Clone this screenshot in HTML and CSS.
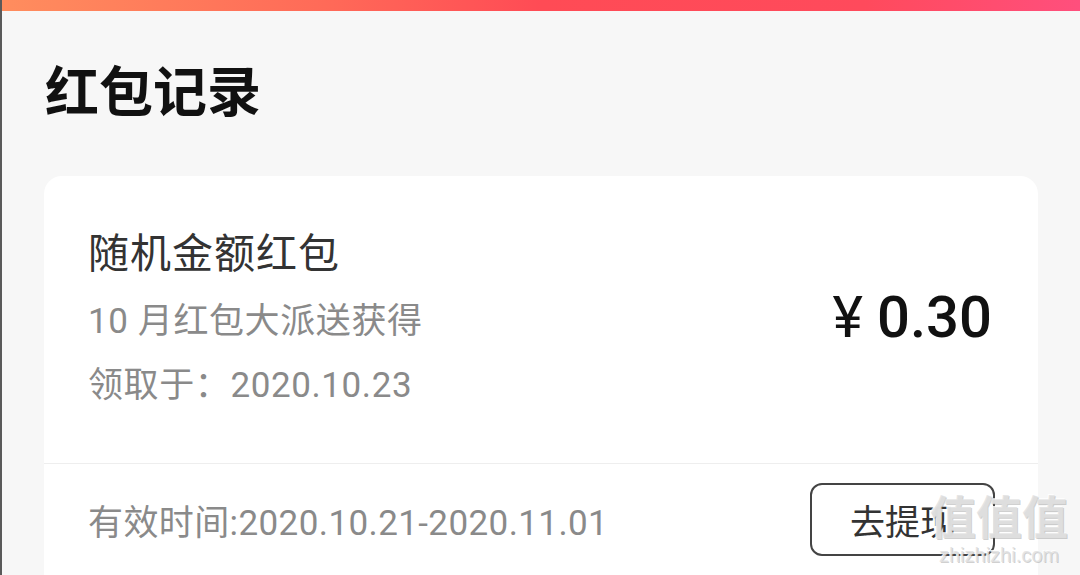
FILE: index.html
```html
<!DOCTYPE html>
<html>
<head>
    <meta charset="utf-8">
    <title>红包记录</title>
    <link rel="stylesheet" href="styles.css">
</head>
<body>
    <div class="top_bar"></div>
    <div class="page">
        <h1 class="page_title">红包记录</h1>

        <div class="record_card">
            <div class="record_main">
                <div class="record_info">
                    <div class="record_name">随机金额红包</div>
                    <div class="record_line">10 月红包大派送获得</div>
                    <div class="record_line record_date">领取于：2020.10.23</div>
                </div>
                <div class="record_amount"><span class="yen">¥</span>0.30</div>
            </div>
            <div class="record_footer">
                <span class="record_valid">有效时间:2020.10.21-2020.11.01</span>
                <button class="withdraw_btn">去提现</button>
            </div>
        </div>
    </div>

    <!-- watermark from the original screenshot -->
    <div class="watermark">
        <div class="wm_big">值值值</div>
        <div class="wm_small">zhizhizhi.com</div>
    </div>
</body>
</html>
```

FILE: styles.css
```css
/* General body styling */
body {
    margin: 0;
    height: 575px;
    overflow: hidden;
    background-color: #f7f7f7;
    border-left: 2px solid #5a5a5a;
    font-family: 'Roboto', 'Noto Sans CJK SC', sans-serif;
    position: relative;
}

/* Coloured strip at the top */
.top_bar {
    height: 11px;
    background: linear-gradient(90deg, #ff8d5e 0%, #ff6a58 30%, #ff4b55 50%, #ff4a5c 80%, #ff4f7d 100%);
}

.page {
    padding: 0 42px 0 42px;
}

.page_title {
    margin: 0;
    padding: 48px 0 0 1px;
    height: 165px;
    box-sizing: border-box;
    font-size: 54px;
    line-height: 60px;
    font-weight: 700;
    color: #111;
    font-family: 'Noto Sans CJK SC', sans-serif;
}

/* Record card */
.record_card {
    background-color: #fff;
    border-radius: 18px;
    height: 420px;
}

.record_main {
    display: flex;
    align-items: center;
    justify-content: space-between;
    padding: 44px 46px 47px 44px;
    border-bottom: 1px solid #eeeeee;
}

.record_name {
    font-size: 41px;
    line-height: 60px;
    color: #333;
    font-family: 'Noto Sans CJK SC', sans-serif;
    letter-spacing: 1px;
    margin-bottom: 8px;
}

.record_line {
    font-size: 35px;
    line-height: 68px;
    color: #8a8a8a;
    letter-spacing: 0.6px;
}

.record_date {
    line-height: 60px;
}

.record_amount {
    font-size: 58px;
    font-weight: 500;
    color: #111;
    margin-top: -2px;
}

.yen {
    font-weight: 400;
    margin-right: 14px;
}

.record_footer {
    display: flex;
    align-items: center;
    justify-content: space-between;
    padding: 19px 43px 0 44px;
}

.record_valid {
    font-size: 35px;
    color: #8a8a8a;
    letter-spacing: 0.4px;
}

.withdraw_btn {
    width: 185px;
    height: 73px;
    border: 2px solid #444;
    border-radius: 12px;
    background-color: #fff;
    font-size: 35px;
    color: #333;
    font-family: 'Noto Sans CJK SC', sans-serif;
    padding: 0;
}

/* Watermark overlay */
.watermark {
    position: absolute;
    left: 928px;
    top: 484px;
    text-align: center;
    color: rgba(225, 225, 225, 0.85);
    text-shadow: 1px 1px 0 rgba(120, 120, 120, 0.35), -1px -1px 0 rgba(255, 255, 255, 0.9);
}

.wm_big {
    font-size: 46px;
    line-height: 60px;
    font-weight: 700;
    font-family: 'Noto Sans CJK SC', sans-serif;
}

.wm_small {
    font-size: 20px;
    line-height: 22px;
    font-family: 'Liberation Sans', sans-serif;
}
```
